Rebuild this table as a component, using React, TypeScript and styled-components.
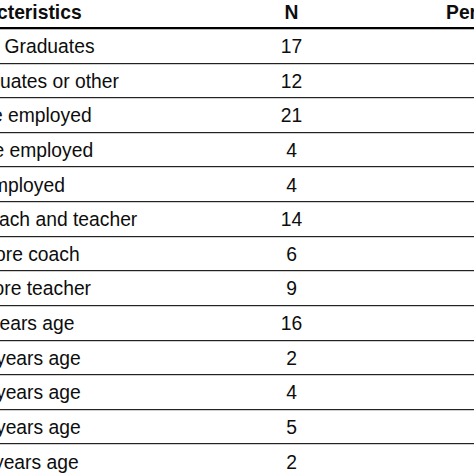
import styled, { createGlobalStyle } from "styled-components";

const GlobalStyle = createGlobalStyle`
   html, body {
      margin: 0;
      padding: 0;
      background: #ffffff;
      overflow: hidden;
   }
`

const Page = styled.div`
   width: 474px;
   height: 474px;
   overflow: hidden;
   background: #ffffff;
   color: #0d0d0d;
   font-family: "Liberation Sans", Arial, Helvetica, sans-serif;
   font-size: 19.3px;
`

const Table = styled.div`
   display: flex;
   flex-direction: column;
   width: 643px;
`

const HeaderRow = styled.div`
   display: grid;
   grid-template-columns: 230px 123px 290px;
   height: 28.9px;
   box-sizing: border-box;
   border-bottom: 2px solid #000000;
   box-shadow: 0 0.5px 0 #777777;
   font-weight: bold;
`

const Row = styled.div`
   display: grid;
   grid-template-columns: 230px 123px 290px;
   height: 34.64px;
   box-sizing: border-box;
   border-bottom: 1px solid #222222;
   box-shadow: 0 0.4px 0 #8a8a8a;
`

const Cell = styled.div<{ $align?: "left" | "center"; $shift?: number; $top?: number }>`
   display: flex;
   align-items: center;
   justify-content: ${({ $align }) => ($align === "center" ? "center" : "flex-start")};
   padding-top: ${({ $top }) => $top ?? 3}px;
   box-sizing: border-box;
   white-space: nowrap;
   line-height: 1.15;

   span {
      display: inline-block;
      margin-left: ${({ $shift }) => $shift ?? 0}px;
   }
`

interface Item {
   label: string
   shift: number
   n: number
}

const rows: Item[] = [
   { label: "Graduates", shift: 4.5, n: 17 },
   { label: "uates or other", shift: 0, n: 12 },
   { label: "e employed", shift: -8, n: 21 },
   { label: "e employed", shift: -6.5, n: 4 },
   { label: "mployed", shift: -8, n: 4 },
   { label: "ach and teacher", shift: -1, n: 14 },
   { label: "ore coach", shift: -5, n: 6 },
   { label: "ore teacher", shift: -6.5, n: 9 },
   { label: "ears age", shift: -0.5, n: 16 },
   { label: "years age", shift: -4, n: 2 },
   { label: "years age", shift: -4, n: 4 },
   { label: "years age", shift: -4, n: 5 },
   { label: "years age", shift: -6, n: 2 },
]

const total = rows.slice(0, 2).reduce((s, r) => s + r.n, 0)

export default function App() {
   return (
      <Page>
         <GlobalStyle />
         <Table>
            <HeaderRow>
               <Cell $shift={-3} $top={0}><span>cteristics</span></Cell>
               <Cell $align="center" $top={0}><span>N</span></Cell>
               <Cell $align="center" $top={0}><span>Percentage</span></Cell>
            </HeaderRow>
            {rows.map((r, i) => (
               <Row key={i}>
                  <Cell $shift={r.shift}><span>{r.label}</span></Cell>
                  <Cell $align="center"><span>{r.n}</span></Cell>
                  <Cell $align="center"><span>{((r.n / total) * 100).toFixed(1)}</span></Cell>
               </Row>
            ))}
         </Table>
      </Page>
   );
}
